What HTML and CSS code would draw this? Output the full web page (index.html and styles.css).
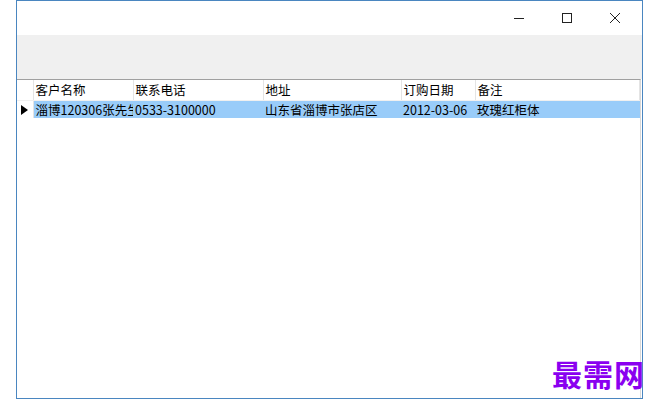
FILE: index.html
```html
<!DOCTYPE html>
<html lang="zh-CN">
<head>
    <meta charset="UTF-8">
    <title>订购记录</title>
    <link rel="stylesheet" href="styles.css">
</head>
<body>
    <div class="window">
        <div class="titlebar">
            <div class="caption-btn">
                <svg width="12" height="12" viewBox="0 0 12 12"><path d="M1 6.5H11" stroke="#222" stroke-width="1"/></svg>
            </div>
            <div class="caption-btn">
                <svg width="12" height="12" viewBox="0 0 12 12"><rect x="1.5" y="1.5" width="9" height="9" fill="none" stroke="#222" stroke-width="1"/></svg>
            </div>
            <div class="caption-btn">
                <svg width="12" height="12" viewBox="0 0 12 12"><path d="M1 1L11 11M11 1L1 11" stroke="#222" stroke-width="1"/></svg>
            </div>
        </div>

        <div class="toolbar"></div>

        <div class="grid">
            <table class="data">
                <colgroup>
                    <col class="c-rowhead">
                    <col class="c-name">
                    <col class="c-phone">
                    <col class="c-addr">
                    <col class="c-date">
                    <col>
                </colgroup>
                <thead>
                    <tr>
                        <th class="rowhead"></th>
                        <th>客户名称</th>
                        <th>联系电话</th>
                        <th>地址</th>
                        <th>订购日期</th>
                        <th>备注</th>
                    </tr>
                </thead>
                <tbody>
                    <tr class="selected">
                        <td class="rowhead"><svg width="7" height="10" viewBox="0 0 7 10"><path d="M0 0L7 5L0 10Z" fill="#000"/></svg></td>
                        <td>淄博120306张先生</td>
                        <td>0533-3100000</td>
                        <td>山东省淄博市张店区</td>
                        <td>2012-03-06</td>
                        <td>玫瑰红柜体</td>
                    </tr>
                </tbody>
            </table>
        </div>

        <div class="watermark">最需网</div>
    </div>
</body>
</html>
```

FILE: styles.css
```css
body {
    margin: 0;
    background: #fff;
    font-family: "Noto Sans CJK SC", "Noto Sans", sans-serif;
}
.window {
    position: relative;
    width: 627px;
    height: 399px;
    margin-left: 16px;
    border: 1px solid #4a86c0;
    box-sizing: border-box;
    display: flex;
    flex-direction: column;
    background: #fff;
}
.titlebar {
    height: 34px;
    display: flex;
    justify-content: flex-end;
    padding-right: 3px;
}
.caption-btn {
    width: 48px;
    display: flex;
    align-items: center;
    justify-content: center;
}
.toolbar {
    height: 44px;
    background: #f0f0f0;
}
.grid {
    flex: 1;
    background: #fff;
    border-top: 1px solid #a0a0a0;
    margin-right: 1px;
    border-right: 1px solid #d8d8d8;
}
.data {
    width: 100%;
    table-layout: fixed;
    border-collapse: collapse;
    font-size: 12.5px;
    color: #000;
}
.c-rowhead { width: 16px; }
.c-name { width: 100px; }
.c-phone { width: 130px; }
.c-addr { width: 138px; }
.c-date { width: 74px; }
.data th {
    height: 20px;
    padding: 0 0 0 2px;
    font-weight: normal;
    text-align: left;
    line-height: 16px;
    border-right: 1px solid #e4e4e4;
    border-bottom: 1px solid #f0f0f0;
    white-space: nowrap;
    overflow: hidden;
}
.data td {
    height: 17px;
    padding: 0 0 0 2px;
    line-height: 16px;
    white-space: nowrap;
    overflow: hidden;
}
.selected td {
    background: #99ccf9;
}
.selected td.rowhead {
    background: #fff;
    padding-left: 4px;
    border-right: 1px solid #e4e4e4;
}
.rowhead svg {
    display: block;
}
.watermark {
    position: absolute;
    left: 535px;
    top: 354px;
    font-size: 30px;
    font-weight: bold;
    color: #8a00f0;
    letter-spacing: 1px;
    line-height: 36px;
    white-space: nowrap;
}
```
